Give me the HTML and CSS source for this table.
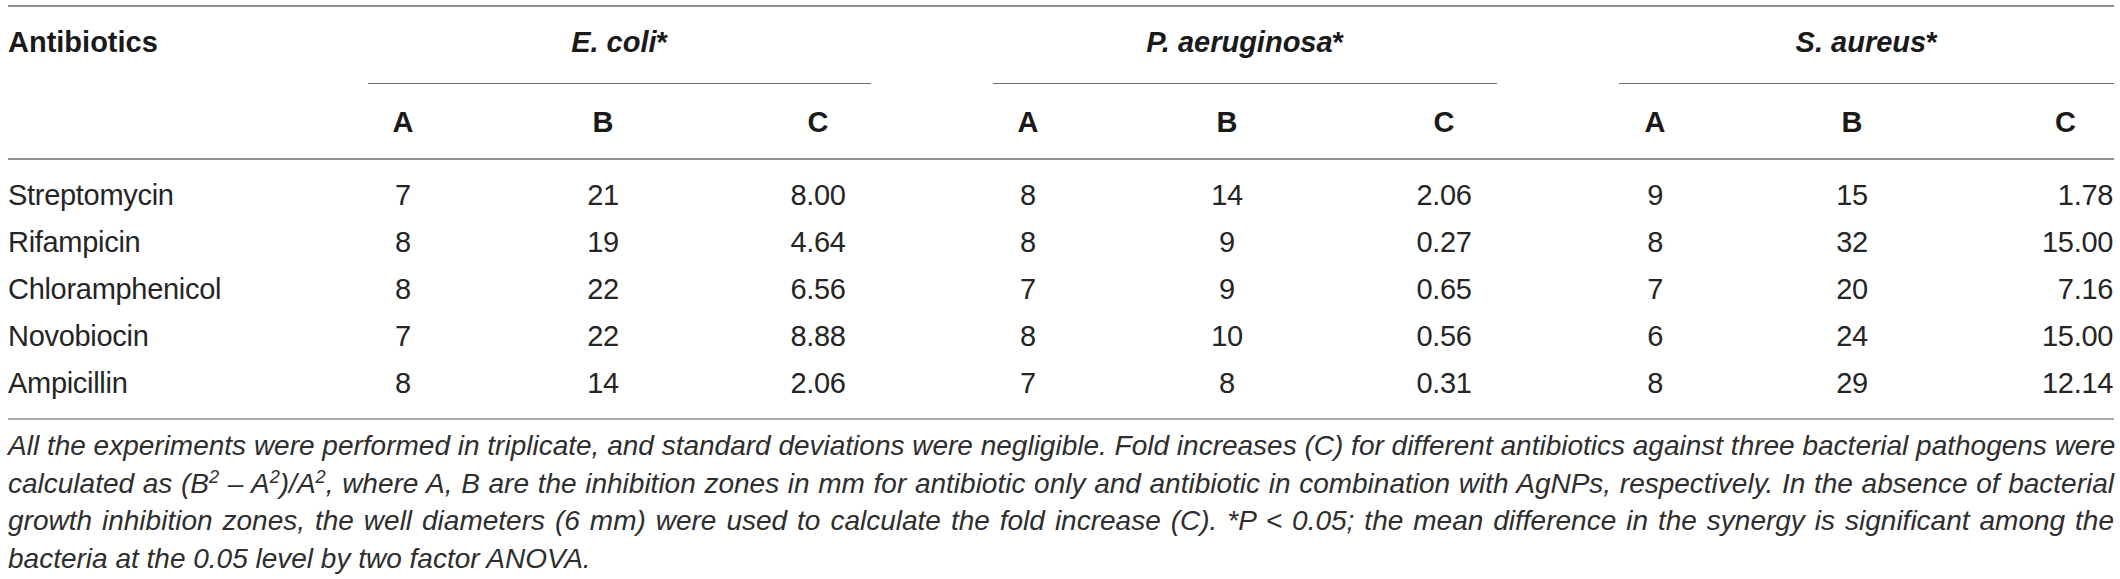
FILE: index.html
```html
<!DOCTYPE html>
<html lang="en">
<head>
  <meta charset="UTF-8">
  <meta name="viewport" content="width=device-width, initial-scale=1.0">
  <title>Synergy of antibiotics with AgNPs</title>
  <link rel="stylesheet" href="styles.css">
</head>
<body>

  <table class="synergy">
    <colgroup>
      <col class="c-name">
      <col class="c-ea"><col class="c-eb"><col class="c-ec">
      <col class="c-pa"><col class="c-pb"><col class="c-pc">
      <col class="c-sa"><col class="c-sb"><col class="c-sc">
    </colgroup>
    <thead>
      <tr class="groups">
        <th class="name">Antibiotics</th>
        <th colspan="3"><div class="group g-e"><i>E. coli</i>*</div></th>
        <th colspan="3"><div class="group g-p"><i>P. aeruginosa</i>*</div></th>
        <th colspan="3"><div class="group g-s"><i>S. aureus</i>*</div></th>
      </tr>
      <tr class="letters">
        <th></th>
        <th>A</th><th>B</th><th>C</th>
        <th>A</th><th>B</th><th>C</th>
        <th>A</th><th>B</th><th class="last">C</th>
      </tr>
    </thead>
    <tbody>
      <tr>
        <td class="name">Streptomycin</td>
        <td>7</td><td>21</td><td>8.00</td>
        <td>8</td><td>14</td><td>2.06</td>
        <td>9</td><td>15</td><td class="last">1.78</td>
      </tr>
      <tr>
        <td class="name">Rifampicin</td>
        <td>8</td><td>19</td><td>4.64</td>
        <td>8</td><td>9</td><td>0.27</td>
        <td>8</td><td>32</td><td class="last">15.00</td>
      </tr>
      <tr>
        <td class="name">Chloramphenicol</td>
        <td>8</td><td>22</td><td>6.56</td>
        <td>7</td><td>9</td><td>0.65</td>
        <td>7</td><td>20</td><td class="last">7.16</td>
      </tr>
      <tr>
        <td class="name">Novobiocin</td>
        <td>7</td><td>22</td><td>8.88</td>
        <td>8</td><td>10</td><td>0.56</td>
        <td>6</td><td>24</td><td class="last">15.00</td>
      </tr>
      <tr>
        <td class="name">Ampicillin</td>
        <td>8</td><td>14</td><td>2.06</td>
        <td>7</td><td>8</td><td>0.31</td>
        <td>8</td><td>29</td><td class="last">12.14</td>
      </tr>
    </tbody>
  </table>

  <div class="caption">
    <span class="line">All the experiments were performed in triplicate, and standard deviations were negligible. Fold increases (C) for different antibiotics against three bacterial pathogens were</span>
    <span class="line">calculated as (B<sup>2</sup> &ndash; A<sup>2</sup>)/A<sup>2</sup>, where A, B are the inhibition zones in mm for antibiotic only and antibiotic in combination with AgNPs, respectively. In the absence of bacterial</span>
    <span class="line">growth inhibition zones, the well diameters (6 mm) were used to calculate the fold increase (C). *P &lt; 0.05; the mean difference in the synergy is significant among the</span>
    <span class="line end">bacteria at the 0.05 level by two factor ANOVA.</span>
  </div>

</body>
</html>
```

FILE: styles.css
```css
body {
  margin: 0;
  padding: 5px 6px 0 8px;
  background-color: #ffffff;
  color: #1e1e1e;
  font-family: 'Liberation Sans', Arial, sans-serif;
}

.synergy {
  width: 100%;
  border-collapse: collapse;
  table-layout: fixed;
  border-top: 2px solid #8f8f8f;
}

.c-name { width: 295px; }
.c-ea { width: 200px; }
.c-eb { width: 200px; }
.c-ec { width: 230px; }
.c-pa { width: 190px; }
.c-pb { width: 208px; }
.c-pc { width: 226px; }
.c-sa { width: 196px; }
.c-sb { width: 198px; }
.c-sc { width: 163px; }

th {
  font-size: 29px;
  font-weight: bold;
  line-height: 34px;
  text-align: center;
  padding: 0;
  color: #1a1a1a;
}

.groups th {
  vertical-align: top;
  padding-top: 18px;
}

.groups th.name {
  text-align: left;
}

.group {
  padding-bottom: 24px;
  border-bottom: 1px solid #6e6e6e;
}

.g-e { margin: 0 62px 0 65px; }
.g-p { margin: 0 60px; }
.g-s { margin: 0 0 0 62px; }

.letters th {
  padding: 21px 0 19px;
  border-bottom: 2px solid #8f8f8f;
}

.letters th.last {
  text-align: right;
  padding-right: 38px;
}

td {
  font-size: 29px;
  letter-spacing: -0.3px;
  line-height: 31px;
  text-align: center;
  padding: 8px 0;
  color: #252525;
}

td.name {
  text-align: left;
}

td.last {
  text-align: right;
  padding-right: 1px;
}

tbody tr:first-child td {
  padding-top: 20px;
}

tbody tr:last-child td {
  padding-bottom: 19px;
  border-bottom: 2px solid #ababab;
}

.caption {
  margin-top: 7px;
  font-size: 28px;
  font-style: italic;
  line-height: 37.7px;
  color: #2e2e2e;
}

.caption .line {
  display: block;
  white-space: nowrap;
  text-align: justify;
  text-align-last: justify;
}

.caption .line.end {
  text-align-last: left;
}

.caption sup {
  font-size: 0.65em;
  line-height: 0;
}
```
